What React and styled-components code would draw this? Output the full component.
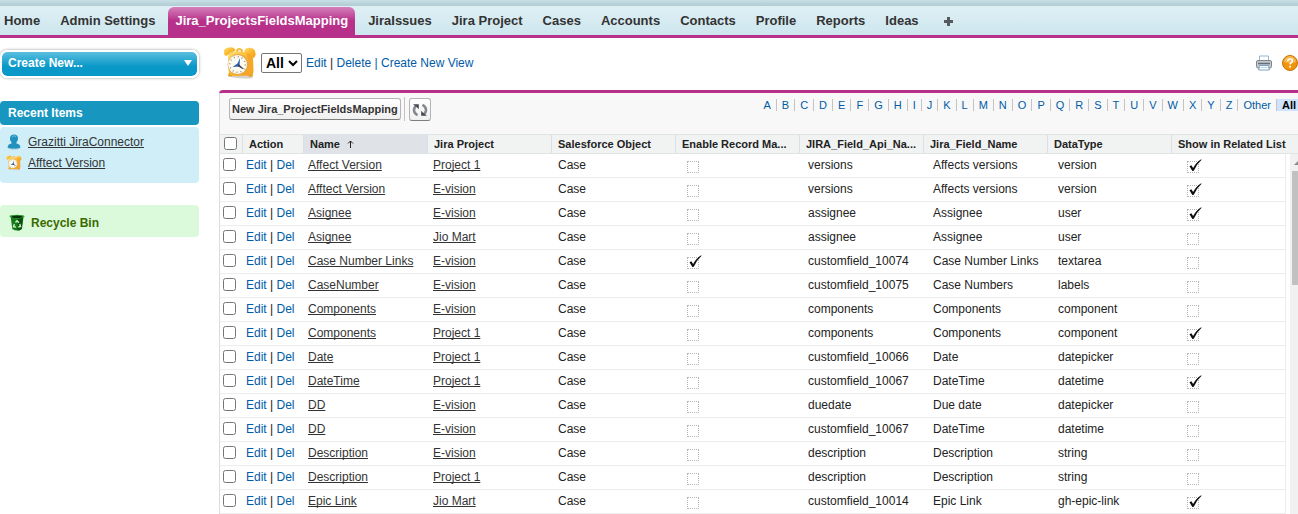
import React, { useState } from "react";
import styled, { createGlobalStyle } from "styled-components";

const tabs = [
  "Home",
  "Admin Settings",
  "Jira_ProjectsFieldsMapping",
  "JiraIssues",
  "Jira Project",
  "Cases",
  "Accounts",
  "Contacts",
  "Profile",
  "Reports",
  "Ideas",
];

const letters = [..."ABCDEFGHIJKLMNOPQRSTUVWXYZ", "Other", "All"];

const columns = [
  "Jira Project",
  "Salesforce Object",
  "Enable Record Ma...",
  "JIRA_Field_Api_Na...",
  "Jira_Field_Name",
  "DataType",
  "Show in Related List",
];

// name, project, mapping enabled, api name, field name, data type, related list
const rows = [
  ["Affect Version", "Project 1", false, "versions", "Affects versions", "version", true],
  ["Afftect Version", "E-vision", false, "versions", "Affects versions", "version", true],
  ["Asignee", "E-vision", false, "assignee", "Assignee", "user", true],
  ["Asignee", "Jio Mart", false, "assignee", "Assignee", "user", false],
  ["Case Number Links", "E-vision", true, "customfield_10074", "Case Number Links", "textarea", false],
  ["CaseNumber", "E-vision", false, "customfield_10075", "Case Numbers", "labels", false],
  ["Components", "E-vision", false, "components", "Components", "component", false],
  ["Components", "Project 1", false, "components", "Components", "component", true],
  ["Date", "Project 1", false, "customfield_10066", "Date", "datepicker", false],
  ["DateTime", "Project 1", false, "customfield_10067", "DateTime", "datetime", true],
  ["DD", "E-vision", false, "duedate", "Due date", "datepicker", false],
  ["DD", "E-vision", false, "customfield_10067", "DateTime", "datetime", false],
  ["Description", "E-vision", false, "description", "Description", "string", false],
  ["Description", "Project 1", false, "description", "Description", "string", false],
  ["Epic Link", "Jio Mart", false, "customfield_10014", "Epic Link", "gh-epic-link", true],
];

const ClockIcon = ({ size }) => (
  <svg width={size} height={size} viewBox="0 0 34 34" aria-hidden="true">
    <defs>
      <linearGradient id={`body${size}`} x1="0" y1="0" x2="1" y2="1">
        <stop offset="0" stopColor="#ffe07a" />
        <stop offset="0.5" stopColor="#fbb92d" />
        <stop offset="1" stopColor="#ee9a1c" />
      </linearGradient>
    </defs>
    <path d="M5 30.500q12 3 25 1.500l-1-3H6z" fill="#d5d0c8" />
    <path d="M6 26l-1 4 4 .5 2-3zM25 27l1 4 4-1-1-5z" fill="#e79c22" />
    <path d="M1 7Q0 2 6 1.500q5-1 6.500 3L3 10Q1 9.500 1 7z" fill={`url(#body${size})`} />
    <path d="M21 5q2-4 7-3 5 1 4.500 7-1 4-3.500 3z" fill={`url(#body${size})`} />
    <path d="M13 4q3-4 7 0l-.5 3-6 0z" fill="#f3b63d" />
    <path d="M15 4.500q1.500-1.500 3 0v2h-3z" fill="#fff4cf" />
    <path
      d="M5 10q2-5 8-4.500l10 .5q6 0 7 5l.5 14q0 4-4 4.500l-15 .5q-5 0-6-5z"
      fill={`url(#body${size})`}
    />
    <path d="M24 7q5 1 5.500 5l.5 13q-1 4-4 4z" fill="#f7a62a" />
    <circle cx="15" cy="18.500" r="10.500" fill="#e5a848" />
    <circle cx="14.500" cy="18.500" r="9.500" fill="#fdfaf0" />
    <circle
      cx="14.500"
      cy="18.500"
      r="7.800"
      fill="none"
      stroke="#968e82"
      strokeWidth="1.500"
      strokeDasharray="1 3.084"
    />
    <path d="M17 12l-.5 8.500-7 .5 5-3.500z" fill="#2c63b5" />
    <path d="M15.500 18l5 4.500-1 .5-5-3z" fill="#39425b" />
  </svg>
);

const PersonIcon = () => (
  <svg width="16" height="16" viewBox="0 0 16 16" aria-hidden="true">
    <ellipse cx="8" cy="13.500" rx="6.500" ry="2" fill="#9cc9da" />
    <path
      d="M8 .5c2.600 0 4 1.600 4 4 0 1.800-.7 2.800-1.500 3.600v1.400c2 .4 3.700 1.200 3.900 4-3 1.300-9.800 1.300-12.800 0 .2-2.800 1.900-3.600 3.900-4V8.100C4.700 7.300 4 6.300 4 4.500c0-2.400 1.400-4 4-4z"
      fill="#2191bd"
    />
    <path d="M6 2.500q2-1.500 4 0" stroke="#6cbcd9" fill="none" />
  </svg>
);

const BinIcon = () => (
  <svg width="16" height="17" viewBox="0 0 16 17" aria-hidden="true">
    <path d="M0 2L1.500 1.500l1.800 13.500q5 3 9.700 0l1.500-12 1-1q-7-2-15.500 0z" fill="#167a1b" />
    <path d="M9 5l5-1-1.500 11q-1.500 1.500-4 1.500z" fill="#0c5010" />
    <ellipse cx="8" cy="2.500" rx="7.500" ry="1.800" fill="#39a53b" />
    <ellipse cx="8" cy="2.800" rx="5.800" ry="1.200" fill="#06350a" />
    <path
      d="M6.500 8.500L8 6.800l2 1.900M10.800 10l.7 2.500-2.200.5M7 13l-2.500-.4.9-2.600"
      fill="none"
      stroke="#c8f0c2"
      strokeWidth="1.400"
    />
  </svg>
);

const PrinterIcon = () => (
  <svg width="16" height="16" viewBox="0 0 16 16" aria-hidden="true">
    <path d="M3.500 6V1h9v5" fill="#fff" stroke="#8fb9d6" />
    <rect x=".5" y="5.500" width="15" height="7.500" rx="1.500" fill="#c3c8cd" stroke="#7e868e" />
    <path d="M2 8.500h12" stroke="#666e77" strokeWidth="1.500" />
    <path d="M3.500 10.500h9l.8 4.500H2.700z" fill="#fff" stroke="#76a5c5" />
    <path d="M4.500 12.500h7" stroke="#b9d6e8" />
  </svg>
);

const HelpIcon = () => (
  <svg width="16" height="16" viewBox="0 0 16 16" aria-hidden="true">
    <circle cx="8" cy="8" r="7.500" fill="#ef940b" stroke="#c5710b" />
    <path d="M2 7a6 6 0 0 1 12 0q-6 2-12 0z" fill="#f8b84e" />
    <path
      d="M5.700 6.200Q5.800 4 8.100 4q2.300 0 2.300 2 0 1-1.200 1.700Q8.100 8.300 8.100 9.600"
      fill="none"
      stroke="#fff"
      strokeWidth="1.700"
    />
    <path d="M7.200 10.800H9v1.700H7.200z" fill="#fff" />
  </svg>
);

const RefreshIcon = () => (
  <svg width="16" height="14" viewBox="0 0 16 14" aria-hidden="true">
    <path d="M5.500 12.300Q1 9.500 2.300 5.500q.5-1.500 1.500-2.500" fill="none" stroke="#85898f" strokeWidth="2.500" />
    <path d="M1 1.200h5.800v5L4.900 4.300z" fill="#44484e" />
    <path d="M10.500 1.700Q15 4.500 13.700 8.500q-.5 1.500-1.500 2.500" fill="none" stroke="#85898f" strokeWidth="2.500" />
    <path d="M15 12.800H9.200v-5l1.900 1.900z" fill="#44484e" />
  </svg>
);

const Flag = ({ label, checked }) => (
  <FlagBox>
    <FlagInput type="checkbox" aria-label={label} checked={checked} readOnly />
    {checked && (
      <Tick viewBox="0 0 13 13" aria-hidden="true">
        <path d="M.5 7.200l1.900-1 1.700 2.700Q7.500 3 12.300.300l.3.500Q8 5 4.800 11.800l-1.500.3z" fill="#111" />
      </Tick>
    )}
  </FlagBox>
);

const App = () => {
  const [selected, setSelected] = useState([]);
  const toggle = (index) =>
    setSelected((prev) =>
      prev.includes(index) ? prev.filter((i) => i !== index) : [...prev, index]
    );

  return (
    <>
      <GlobalStyle />
      <TabBar>
        {tabs.map((tab) => (
          <Tab key={tab} href="#" $active={tab === "Jira_ProjectsFieldsMapping"}>
            {tab}
          </Tab>
        ))}
        <AllTabs href="#" aria-label="All Tabs">
          <svg width="9" height="9" viewBox="0 0 9 9" aria-hidden="true">
            <path d="M3 0h3v3h3v3H6v3H3V6H0V3h3z" fill="#555a5e" />
          </svg>
        </AllTabs>
      </TabBar>
      <Page>
        <Sidebar>
          <CreateButton type="button">
            Create New...
            <svg width="8" height="6" viewBox="0 0 8 6" aria-hidden="true">
              <path d="M0 0h8L4 6z" fill="#fff" />
            </svg>
          </CreateButton>
          <RecentTitle>Recent Items</RecentTitle>
          <RecentList>
            <RecentItem>
              <PersonIcon />
              <TextLink href="#">Grazitti JiraConnector</TextLink>
            </RecentItem>
            <RecentItem>
              <ClockIcon size={16} />
              <TextLink href="#">Afftect Version</TextLink>
            </RecentItem>
          </RecentList>
          <RecycleBin href="#">
            <BinIcon />
            Recycle Bin
          </RecycleBin>
        </Sidebar>
        <Main>
          <ViewBar>
            <ClockIcon size={34} />
            <ViewSelect aria-label="View">
              <option>All</option>
            </ViewSelect>
            <ViewLinks>
              <BlueLink href="#">Edit</BlueLink> | <BlueLink href="#">Delete</BlueLink>{" "}
              <BlueLink href="#">| Create New View</BlueLink>
            </ViewLinks>
            <PageTools>
              <IconLink href="#" aria-label="Printable View">
                <PrinterIcon />
              </IconLink>
              <IconLink href="#" aria-label="Help">
                <HelpIcon />
              </IconLink>
            </PageTools>
          </ViewBar>
          <Panel>
            <Toolbar>
              <Button type="button">New Jira_ProjectFieldsMapping</Button>
              <Divider />
              <RefreshButton type="button" aria-label="Refresh">
                <RefreshIcon />
              </RefreshButton>
              <Rolodex>
                {letters.map((letter) => (
                  <Letter key={letter} href="#" $current={letter === "All"}>
                    {letter}
                  </Letter>
                ))}
              </Rolodex>
            </Toolbar>
            <GridBox>
              <Table>
                <thead>
                  <HeadRow>
                    <HeadCell $check>
                      <CheckBox
                        type="checkbox"
                        aria-label="Select all"
                        checked={selected.length === rows.length}
                        onChange={(e) =>
                          setSelected(e.target.checked ? rows.map((_, i) => i) : [])
                        }
                      />
                    </HeadCell>
                    <HeadCell>Action</HeadCell>
                    <HeadCell $sorted>
                      Name
                      <SortArrow viewBox="0 0 7 8" aria-hidden="true">
                        <path d="M3.500 8V1M1 3.500L3.500 1 6 3.500" fill="none" stroke="#222" />
                      </SortArrow>
                    </HeadCell>
                    {columns.map((column) => (
                      <HeadCell key={column}>{column}</HeadCell>
                    ))}
                  </HeadRow>
                </thead>
                <Body>
                  {rows.map(([name, project, mapping, api, field, type, related], i) => (
                    <Row key={i}>
                      <Cell $check>
                        <CheckBox
                          type="checkbox"
                          aria-label={`Select ${name}`}
                          checked={selected.includes(i)}
                          onChange={() => toggle(i)}
                        />
                      </Cell>
                      <Cell $action>
                        <BlueLink href="#">Edit</BlueLink> | <BlueLink href="#">Del</BlueLink>
                      </Cell>
                      <Cell>
                        <TextLink href="#">{name}</TextLink>
                      </Cell>
                      <Cell>
                        <TextLink href="#">{project}</TextLink>
                      </Cell>
                      <Cell>Case</Cell>
                      <Cell>
                        <Flag label="Enable Record Mapping" checked={mapping} />
                      </Cell>
                      <Cell>{api}</Cell>
                      <Cell>{field}</Cell>
                      <Cell>{type}</Cell>
                      <Cell>
                        <Flag label="Show in Related List" checked={related} />
                      </Cell>
                    </Row>
                  ))}
                </Body>
              </Table>
              <ScrollTrack>
                <svg width="8" height="17" viewBox="0 0 8 17" aria-hidden="true">
                  <path d="M4 11l4-4v4z" fill="#8b8b8b" />
                </svg>
                <ScrollThumb />
              </ScrollTrack>
            </GridBox>
          </Panel>
        </Main>
      </Page>
    </>
  );
};

const GlobalStyle = createGlobalStyle`
  * {
    box-sizing: border-box;
  }
  body {
    margin: 0;
    background: #ffffff;
    color: #222222;
    font-family: "Liberation Sans", Arial, sans-serif;
    font-size: 12px;
    overflow-x: hidden;
  }
  svg {
    display: block;
    flex: none;
  }
`;

const TabBar = styled.nav`
  display: flex;
  gap: 6px;
  height: 38px;
  padding-top: 7px;
  border-bottom: 3px solid #b7308a;
  background: linear-gradient(#c8dfe6, #b0cbd3) top / 100% 6px no-repeat,
    linear-gradient(#e3f1f6, #cde6ee);
`;
const Tab = styled.a`
  padding: 0 7px;
  border-radius: 6px 6px 0 0;
  color: ${(props) => (props.$active ? "#ffffff" : "#333333")};
  background: ${(props) =>
    props.$active
      ? "linear-gradient(#d580bb, #b7308a 50%, #b7308a)"
      : "transparent"};
  font-size: 13px;
  font-weight: bold;
  line-height: 27px;
  text-decoration: none;
  white-space: nowrap;
  &:first-child {
    padding-left: 4px;
  }
`;
const AllTabs = styled.a`
  display: flex;
  align-items: center;
  padding: 0 12px;
`;
const Page = styled.div`
  display: flex;
  align-items: flex-start;
  gap: 20px;
  padding-top: 12px;
`;
const Sidebar = styled.aside`
  flex: none;
  width: 199px;
`;
const CreateButton = styled.button`
  display: flex;
  align-items: center;
  justify-content: space-between;
  width: 100%;
  height: 28px;
  padding: 0 5px 2px 6px;
  border: 2px solid #ffffff;
  border-radius: 7px;
  background: linear-gradient(#5bbfdf, #0a98c8 60%, #0a98c8) padding-box;
  box-shadow: 0 0 3px #999999;
  color: #ffffff;
  font: bold 12px "Liberation Sans", Arial, sans-serif;
  cursor: pointer;
`;
const RecentTitle = styled.h2`
  margin: 23px 0 2px;
  padding-left: 8px;
  border-radius: 4px;
  background: #1797c0;
  color: #ffffff;
  font-size: 12px;
  line-height: 24px;
`;
const RecentList = styled.ul`
  margin: 0 0 22px;
  padding: 4px 6px 10px;
  border-radius: 4px;
  background: #cfeef8;
  list-style: none;
`;
const RecentItem = styled.li`
  display: flex;
  align-items: center;
  gap: 6px;
  height: 21px;
`;
const RecycleBin = styled.a`
  display: flex;
  align-items: center;
  gap: 6px;
  height: 32px;
  padding: 3px 9px 0;
  border-radius: 4px;
  background: #dbfadb;
  color: #3b6a00;
  font-weight: bold;
  text-decoration: none;
`;
const Main = styled.main`
  flex: 1;
  min-width: 0;
`;
const ViewBar = styled.div`
  display: flex;
  align-items: center;
  height: 40px;
  padding: 0 0 14px 4px;
`;
const ViewSelect = styled.select`
  width: 41px;
  height: 20px;
  margin: 0 4px;
  border: 1px solid #767676;
  border-radius: 2px;
  background: #ffffff;
  color: #000000;
  font: bold 14px "Liberation Sans", Arial, sans-serif;
`;
const ViewLinks = styled.div`
  white-space: nowrap;
`;
const PageTools = styled.div`
  display: flex;
  gap: 10px;
  margin-left: auto;
`;
const IconLink = styled.a`
  display: block;
`;
const BlueLink = styled.a`
  color: #015ba7;
  text-decoration: none;
`;
const TextLink = styled.a`
  color: #333333;
  text-decoration: underline;
  text-decoration-skip-ink: none;
`;
const Panel = styled.section`
  border-top: 3px solid #b7308a;
  border-radius: 4px 0 0 0;
  background: #f8f8f8;
`;
const Toolbar = styled.div`
  display: flex;
  align-items: flex-start;
  height: 41px;
  padding: 4px 0 0 9px;
  border-left: 1px solid #dcdcdc;
`;
const Button = styled.button`
  height: 22px;
  margin-top: 1px;
  padding: 0 2px;
  border: 1px solid #b5b5b5;
  border-bottom-color: #7f7f7f;
  border-radius: 3px;
  background: linear-gradient(#ffffff, #f0f0f0);
  color: #333333;
  font: bold 11px "Liberation Sans", Arial, sans-serif;
  white-space: nowrap;
  cursor: pointer;
`;
const RefreshButton = styled(Button)`
  display: flex;
  align-items: center;
  justify-content: center;
  width: 22px;
  height: 23px;
`;
const Divider = styled.span`
  width: 1px;
  height: 24px;
  margin: 0 4px 0 3px;
  background: #c4c4c4;
`;
const Rolodex = styled.div`
  display: flex;
  margin: 2px 0 0 auto;
`;
const Letter = styled.a`
  padding: ${(props) => (props.$current ? "0 2px 0 5px" : "0 5px")};
  border-right: ${(props) => (props.$current ? "none" : "1px solid #c4c4c4")};
  background: ${(props) => (props.$current ? "#cfe3ff" : "transparent")};
  color: ${(props) => (props.$current ? "#000000" : "#015ba7")};
  font-size: 11px;
  font-weight: ${(props) => (props.$current ? "bold" : "normal")};
  line-height: 12px;
  text-decoration: none;
`;
const GridBox = styled.div`
  position: relative;
  border-left: 1px solid #dcdcdc;
  background: #ffffff;
`;
const Table = styled.table`
  display: block;
  border-spacing: 0;
  thead {
    display: block;
  }
`;
const HeadRow = styled.tr`
  display: grid;
  grid-template-columns: 23px 61px repeat(7, minmax(0, 124fr)) minmax(0, 126fr);
  height: 20px;
  border-top: 1px solid #e0e3e5;
  border-bottom: 1px solid #e0e3e5;
  background: #f1f3f3;
`;
const HeadCell = styled.th`
  padding: ${(props) => (props.$check ? "2px 4px" : "0 2px 0 6px")};
  border-right: 1px solid #dde0e3;
  background: ${(props) => (props.$sorted ? "#dfe3e7" : "transparent")};
  font-size: 11px;
  line-height: 18px;
  text-align: left;
  white-space: nowrap;
  &:last-child {
    border-right: none;
  }
`;
const SortArrow = styled.svg`
  display: inline-block;
  width: 7px;
  height: 8px;
  margin-left: 7px;
`;
const Body = styled.tbody`
  display: block;
  margin-right: 12px;
`;
const Row = styled.tr`
  display: grid;
  grid-template-columns: 23px 60px repeat(7, minmax(0, 125fr)) minmax(0, 107fr);
  height: 24px;
  border-right: 1px solid #ededed;
  border-bottom: 1px solid #ededed;
`;
const Cell = styled.td`
  padding: ${(props) =>
    props.$check ? "4px 3px" : props.$action ? "0 3px" : "0 5px"};
  line-height: 22px;
  white-space: nowrap;
`;
const CheckBox = styled.input`
  display: block;
  width: 13px;
  height: 13px;
  margin: 0;
`;
const FlagBox = styled.span`
  position: relative;
  display: block;
  width: 12px;
  height: 12px;
  margin: 7px 4px 0;
`;
const FlagInput = styled.input`
  display: block;
  width: 12px;
  height: 12px;
  margin: 0;
  appearance: none;
  border: 1px dotted #b5b5b5;
`;
const Tick = styled.svg`
  position: absolute;
  left: 2px;
  bottom: 1px;
  width: 13px;
  height: 13px;
`;
const ScrollTrack = styled.div`
  position: absolute;
  top: 20px;
  right: 0;
  bottom: 0;
  width: 8px;
  background: #f1f1f1;
`;
const ScrollThumb = styled.div`
  height: 114px;
  margin-left: 2px;
  background: #c1c1c1;
`;

export default App;
